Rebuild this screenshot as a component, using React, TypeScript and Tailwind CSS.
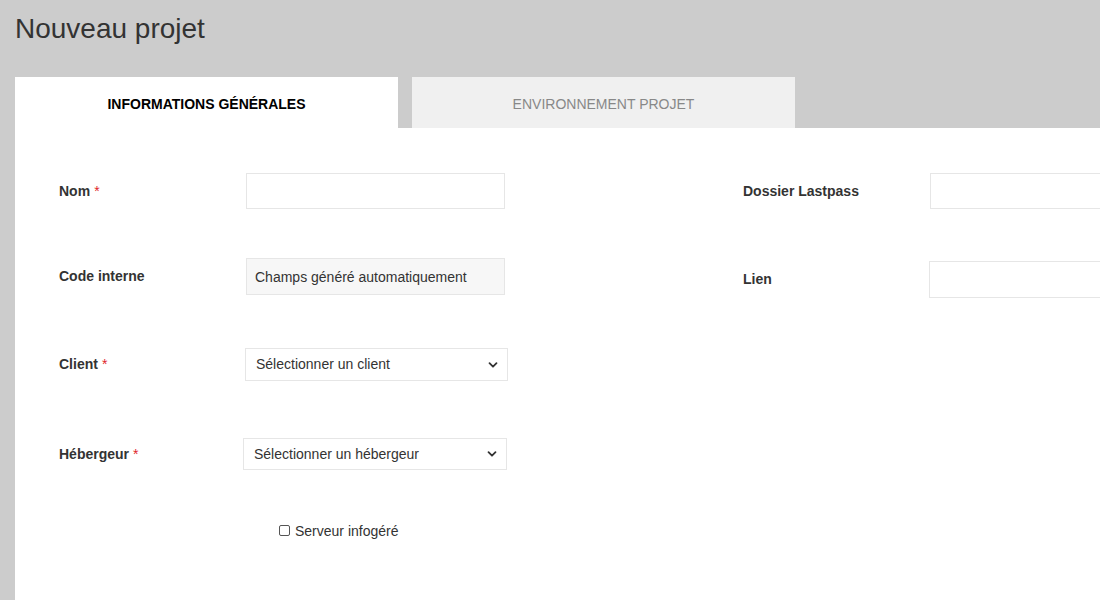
import React from 'react';

const font = { fontFamily: '"Liberation Sans", Arial, sans-serif' };

function Req() {
  return <span className="ml-[4px] text-[#e0262b] font-normal">*</span>;
}

function Chevron() {
  return (
    <svg className="absolute right-[9px] top-1/2 -translate-y-1/2 w-[10px] h-[10px] pointer-events-none" viewBox="0 0 10 10">
      <path d="M1.5 3.2 L5 6.7 L8.5 3.2" fill="none" stroke="#333" strokeWidth="1.8" strokeLinecap="round" strokeLinejoin="round" />
    </svg>
  );
}

export default function App() {
  return (
    <div className="w-[1100px] h-[600px] overflow-hidden bg-[#cccccc] text-[#333]" style={font}>
      <h1 className="pl-[15px] pt-[13px] text-[28px] leading-[32px] font-normal text-[#333]">Nouveau projet</h1>

      <div className="mt-[32px] ml-[15px] flex gap-[14px]">
        <div className="w-[383px] h-[51px] bg-white flex items-center justify-center pt-[3px] text-[14px] font-bold text-black">
          INFORMATIONS GÉNÉRALES
        </div>
        <div className="w-[383px] h-[51px] bg-[#f0f0f0] flex items-center justify-center pt-[3px] text-[14px] text-[#888]">
          ENVIRONNEMENT PROJET
        </div>
      </div>

      <div className="ml-[15px] w-[1200px] h-[500px] bg-white pl-[44px] pt-[45px] flex text-[14px]">
        {/* left column */}
        <div className="w-[684px] flex flex-col">
          <div className="flex items-center h-[36px]">
            <label className="w-[187px] font-bold">Nom<Req /></label>
            <input className="w-[259px] h-[36px] border border-[#e6e6e6] outline-none px-[9px]" />
          </div>
          <div className="flex items-center h-[37px] mt-[49px]">
            <label className="w-[187px] font-bold">Code interne</label>
            <input
              readOnly
              value="Champs généré automatiquement"
              className="w-[259px] h-[37px] border border-[#e6e6e6] bg-[#f7f7f7] outline-none px-[8px] text-[#333]"
            />
          </div>
          <div className="flex items-center h-[33px] mt-[53px]">
            <label className="w-[186px] font-bold">Client<Req /></label>
            <div className="relative w-[263px] h-[33px] border border-[#e6e6e6] flex items-center pl-[10px]">
              Sélectionner un client
              <Chevron />
            </div>
          </div>
          <div className="flex items-center h-[32px] mt-[57px]">
            <label className="w-[184px] font-bold">Hébergeur<Req /></label>
            <div className="relative w-[264px] h-[32px] border border-[#e6e6e6] flex items-center pl-[10px]">
              Sélectionner un hébergeur
              <Chevron />
            </div>
          </div>
          <div className="flex items-center mt-[51px] ml-[220px]">
            <span className="w-[11px] h-[11px] mb-[2px] border border-[#555] rounded-[2px] bg-white" />
            <span className="ml-[5px] text-[#333]">Serveur infogéré</span>
          </div>
        </div>

        {/* right column */}
        <div className="flex flex-col">
          <div className="flex items-center h-[36px]">
            <label className="w-[187px] font-bold">Dossier Lastpass</label>
            <input className="w-[259px] h-[36px] border border-[#e6e6e6] outline-none px-[9px]" />
          </div>
          <div className="flex items-center h-[37px] mt-[52px]">
            <label className="w-[186px] font-bold">Lien</label>
            <input className="w-[259px] h-[37px] border border-[#e6e6e6] outline-none px-[9px]" />
          </div>
        </div>
      </div>
    </div>
  );
}
